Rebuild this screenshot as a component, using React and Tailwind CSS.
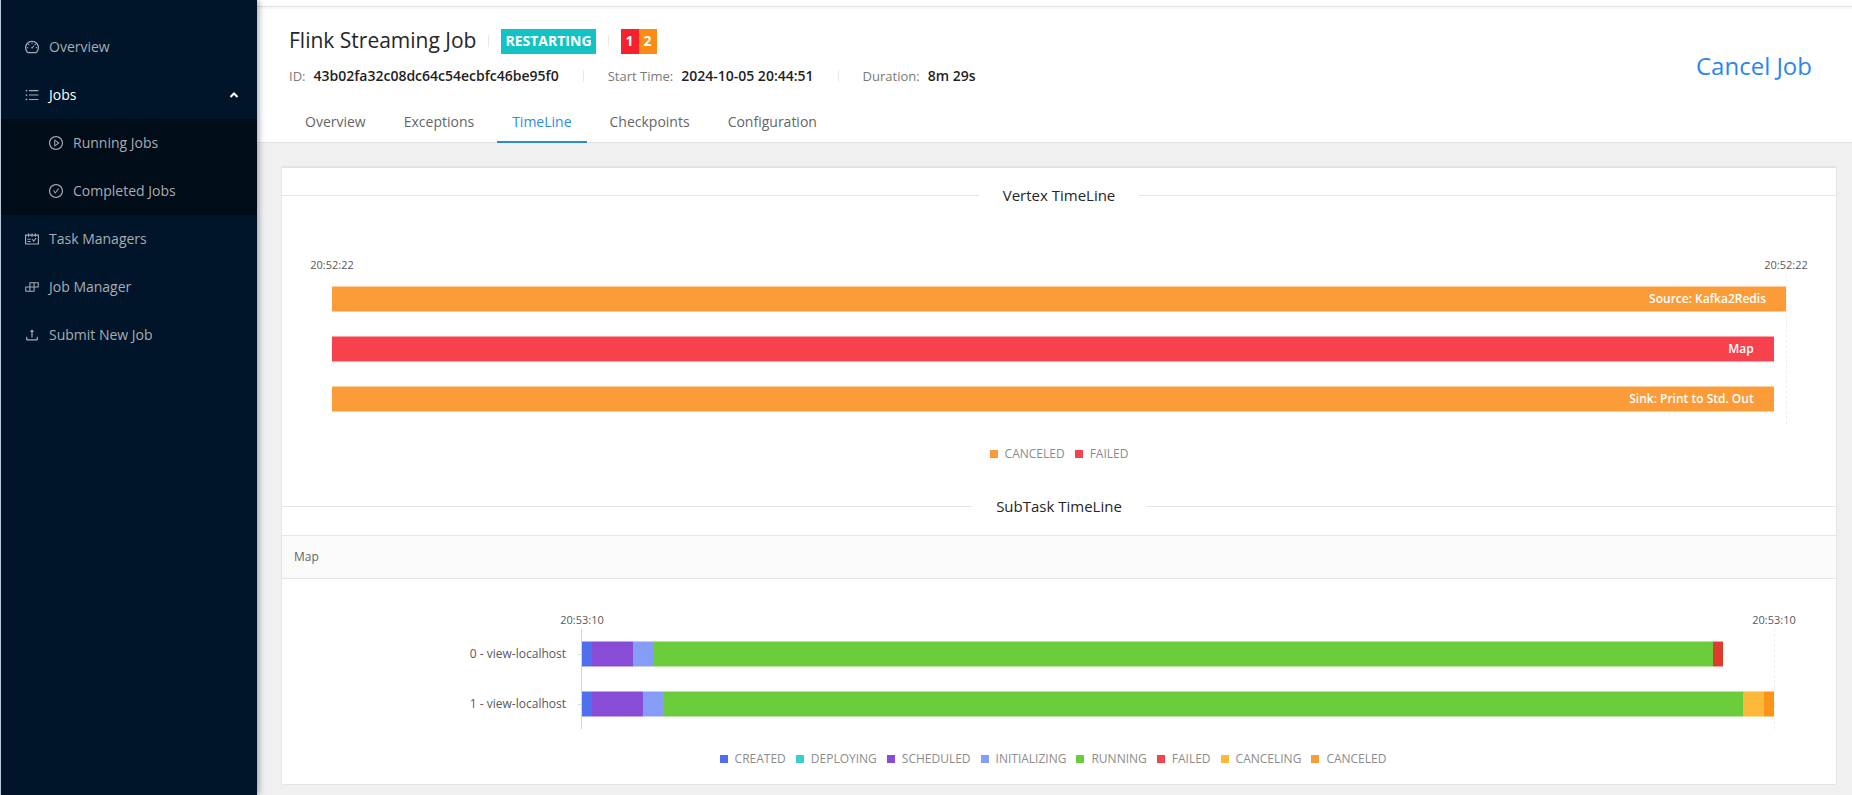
import React, { useState } from "react";
import {
  AiOutlineDashboard,
  AiOutlineBars,
  AiOutlinePlayCircle,
  AiOutlineCheckCircle,
  AiOutlineSchedule,
  AiOutlineBuild,
  AiOutlineUpload,
} from "react-icons/ai";

const tabs = ["Overview", "Exceptions", "TimeLine", "Checkpoints", "Configuration"];

const stateColors = {
  CREATED: "bg-[#4f6fee]",
  DEPLOYING: "bg-[#36cfc9]",
  SCHEDULED: "bg-[#874dd6]",
  INITIALIZING: "bg-[#859df7]",
  RUNNING: "bg-[#6bcd3b]",
  FAILED: "bg-[#f0454c]",
  CANCELING: "bg-[#fbb839]",
  CANCELED: "bg-[#fb9c38]",
};

const vertexBars = [
  { name: "Source: Kafka2Redis", length: 118, color: "bg-[#fb9c38]" },
  { name: "Map", length: 117, color: "bg-[#f7424e]" },
  { name: "Sink: Print to Std. Out", length: 117, color: "bg-[#fb9c38]" },
];
const vertexTotal = 118;

const subtasks = [
  {
    name: "0 - view-localhost",
    stages: [
      { length: 1, color: "bg-[#4f6fee]" },
      { length: 4, color: "bg-[#874dd6]" },
      { length: 2, color: "bg-[#859df7]" },
      { length: 104, color: "bg-[#6bcd3b]" },
      { length: 1, color: "bg-[#e03c2d]" },
    ],
  },
  {
    name: "1 - view-localhost",
    stages: [
      { length: 1, color: "bg-[#4f6fee]" },
      { length: 5, color: "bg-[#874dd6]" },
      { length: 2, color: "bg-[#859df7]" },
      { length: 106, color: "bg-[#6bcd3b]" },
      { length: 2, color: "bg-[#fbb839]" },
      { length: 1, color: "bg-[#fb941b]" },
    ],
  },
];
const subtaskTotal = 117;

const MenuItem = ({ icon: Icon, label, nested }) => (
  <a
    href="#"
    className={`flex h-12 items-center gap-[9px] text-sm text-[#a6adb4] ${nested ? "pl-[47px]" : "pl-[23px]"}`}
  >
    <Icon className="size-4" />
    {label}
  </a>
);

const SideMenu = () => {
  const [open, setOpen] = useState(true);

  return (
    <nav className="z-10 w-[257px] shrink-0 border-l border-[#b9cbd8] bg-[#001529] pt-[23px] shadow-[2px_0_6px_rgba(0,21,41,0.35)]">
      <MenuItem icon={AiOutlineDashboard} label="Overview" />
      <button
        onClick={() => setOpen(!open)}
        className="flex h-12 w-full items-center gap-[9px] pr-[18px] pl-[23px] text-sm text-white"
      >
        <AiOutlineBars className="size-4 text-[#a6adb4]" />
        Jobs
        <svg viewBox="0 0 10 10" className="ml-auto size-2.5" fill="none" stroke="currentColor" strokeWidth="2">
          <path d="M1.5 7 5 3.5 8.5 7" />
        </svg>
      </button>
      {open && (
        <div className="bg-[#000c17]">
          <MenuItem icon={AiOutlinePlayCircle} label="Running Jobs" nested />
          <MenuItem icon={AiOutlineCheckCircle} label="Completed Jobs" nested />
        </div>
      )}
      <MenuItem icon={AiOutlineSchedule} label="Task Managers" />
      <MenuItem icon={AiOutlineBuild} label="Job Manager" />
      <MenuItem icon={AiOutlineUpload} label="Submit New Job" />
    </nav>
  );
};

const Separator = () => <span className="h-3 w-px bg-[#e8e8e8]" />;

const Meta = ({ label, value }) => (
  <div className="flex items-baseline gap-2">
    <span className="text-[13px] text-[#7a7a7a]">{label}:</span>
    <span className="font-semibold text-[#1f1f1f]">{value}</span>
  </div>
);

const JobHeader = () => {
  const [active, setActive] = useState("TimeLine");

  return (
    <header className="border-b border-[#e2e2e2] bg-white">
      <div className="flex items-end justify-between pt-[17px] pr-10 pl-8">
        <div>
          <div className="flex items-center gap-3">
            <h1 className="pb-0.5 text-[21px]/7 text-[#262626]">Flink Streaming Job</h1>
            <Separator />
            <span className="flex h-[25px] items-center bg-[#13c2c2] px-1 text-sm font-bold text-white">
              RESTARTING
            </span>
            <Separator />
            <div className="flex text-sm font-bold text-white">
              <span className="flex h-[25px] w-[18px] items-center justify-center bg-[#f5222d]">1</span>
              <span className="flex h-[25px] w-[18px] items-center justify-center bg-[#fa8c16]">2</span>
            </div>
          </div>
          <div className="mt-2.5 flex items-center gap-6 text-sm">
            <Meta label="ID" value="43b02fa32c08dc64c54ecbfc46be95f0" />
            <Separator />
            <Meta label="Start Time" value="2024-10-05 20:44:51" />
            <Separator />
            <Meta label="Duration" value="8m 29s" />
          </div>
        </div>
        <button className="text-2xl/10 text-[#2b86ec]">Cancel Job</button>
      </div>
      <div className="mt-4 -mb-px flex gap-2 pl-[33px] text-sm">
        {tabs.map((tab) => (
          <button
            key={tab}
            onClick={() => setActive(tab)}
            className={`h-[41px] border-b-2 px-[15px] pt-px ${
              active === tab
                ? "border-[#2a8cd8] font-medium text-[#2a8ce8]"
                : "border-transparent text-[#666666]"
            }`}
          >
            {tab}
          </button>
        ))}
      </div>
    </header>
  );
};

const Divider = ({ title }) => (
  <div className="flex h-6 items-center gap-6">
    <span className="h-px flex-1 bg-[#e5e5e5]" />
    <h2 className="text-[15px] text-[#262626]">{title}</h2>
    <span className="h-px flex-1 bg-[#e5e5e5]" />
  </div>
);

const TimeLabels = ({ time }) => (
  <div className="flex justify-between text-[11px]/4 text-[#595959]">
    <span className="flex w-11 justify-center">{time}</span>
    <span className="flex w-11 justify-center">{time}</span>
  </div>
);

const Legend = ({ items }) => (
  <div className="flex justify-center gap-2.5 text-xs text-[#8c8c8c]">
    {items.map((item) => (
      <span key={item} className="flex items-center gap-[7px]">
        <span className={`size-2 ${stateColors[item]}`} />
        {item}
      </span>
    ))}
  </div>
);

const VertexChart = () => (
  <div className="pt-[50px]">
    <div className="px-7">
      <TimeLabels time="20:52:22" />
    </div>
    <div className="mt-px mr-[49px] ml-[50px] border-r border-dashed border-[#eeeeee]">
      {vertexBars.map((bar) => (
        <div key={bar.name} className="flex h-[50px] items-center">
          <div
            className={`flex h-[26px] items-center justify-end border-y border-white/50 pr-5 text-xs font-semibold text-white ${bar.color}`}
            style={{ width: `${(bar.length / vertexTotal) * 100}%` }}
          >
            {bar.name}
          </div>
        </div>
      ))}
    </div>
    <div className="mt-[22px]">
      <Legend items={["CANCELED", "FAILED"]} />
    </div>
  </div>
);

const SubTaskChart = () => (
  <div className="pt-[33px] pb-[17px]">
    <div className="pr-10 pl-[278px]">
      <TimeLabels time="20:53:10" />
    </div>
    <div className="mt-px flex pr-[61px]">
      <div className="w-[299px] shrink-0">
        {subtasks.map((task) => (
          <div key={task.name} className="flex h-[50px] items-center justify-end gap-3 text-xs text-[#595959]">
            {task.name}
            <span className="h-px w-[3px] bg-[#d9d9d9]" />
          </div>
        ))}
      </div>
      <div className="flex-1 border-r border-l border-dashed border-r-[#eeeeee] border-l-[#d4d4d4] [border-left-style:solid]">
        {subtasks.map((task) => (
          <div key={task.name} className="flex h-[50px] items-center">
            {task.stages.map((stage, i) => (
              <div
                key={i}
                className={`h-[26px] border-y border-white/50 ${stage.color}`}
                style={{ width: `${(stage.length / subtaskTotal) * 100}%` }}
              />
            ))}
          </div>
        ))}
      </div>
    </div>
    <div className="mt-[22px] pr-3">
      <Legend items={Object.keys(stateColors)} />
    </div>
  </div>
);

const App = () => {
  return (
    <div className="flex min-h-screen bg-[#f0f0f0] font-['Open_Sans','Noto_Sans',sans-serif]">
      <SideMenu />
      <div className="min-w-0 flex-1">
        <div className="h-[9px] bg-[#f7f7f7]">
          <div className="h-[7px] border-b border-[#e2e2e2] bg-white" />
        </div>
        <JobHeader />
        <main className="pt-6 pr-4 pb-[11px] pl-[25px]">
          <section className="border-t border-[#e2e2e2] bg-white pt-[15px] shadow-[0_0_1px_rgba(0,0,0,0.25)]">
            <Divider title="Vertex TimeLine" />
            <VertexChart />
            <div className="mt-8">
              <Divider title="SubTask TimeLine" />
            </div>
            <div className="mt-[17px] border-y border-[#e5e5e5] bg-[#fafafa] px-3 py-[13px] text-xs text-[#666666]">
              Map
            </div>
            <SubTaskChart />
          </section>
        </main>
      </div>
    </div>
  );
};

export default App;
